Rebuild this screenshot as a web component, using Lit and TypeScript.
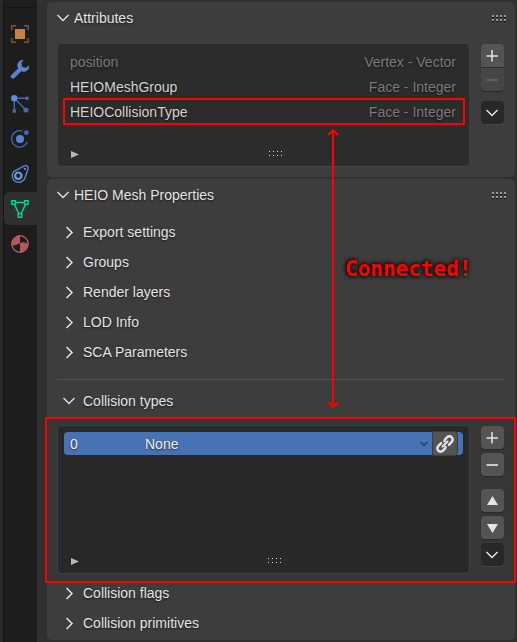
import { LitElement, html, svg, css } from "lit";
import { customElement, property } from "lit/decorators.js";

const chevronDown = html`<svg class="chev" width="14" height="10" viewBox="0 0 14 10" aria-hidden="true">
  <path d="M1.500 2 L7 7.500 L12.500 2" fill="none" stroke="currentColor" stroke-width="1.300" />
</svg>`;
const chevronRight = html`<svg class="chev" width="14" height="14" viewBox="0 0 14 14" aria-hidden="true">
  <path d="M4.500 2 L10 7.500 L4.500 13" fill="none" stroke="currentColor" stroke-width="1.500" />
</svg>`;
const plus = html`<svg width="23" height="23" viewBox="0 0 23 23" aria-hidden="true">
  <path d="M5.500 12 H17 M11 6 V17.500" fill="none" stroke="currentColor" stroke-width="1.500" />
</svg>`;
const minus = html`<svg width="23" height="23" viewBox="0 0 23 23" aria-hidden="true">
  <path d="M5.500 12 H17" fill="none" stroke="currentColor" stroke-width="1.600" />
</svg>`;
const menuDown = html`<svg width="23" height="23" viewBox="0 0 23 23" aria-hidden="true">
  <path d="M5.500 9 L11 14.500 L16.500 9" fill="none" stroke="currentColor" stroke-width="1.500" />
</svg>`;
const arrowUp = html`<svg width="23" height="23" viewBox="0 0 23 23" aria-hidden="true">
  <path d="M6 16 L11.500 7 L17 16 Z" fill="currentColor" />
</svg>`;
const arrowDown = html`<svg width="23" height="23" viewBox="0 0 23 23" aria-hidden="true">
  <path d="M6 8 H17 L11.500 17 Z" fill="currentColor" />
</svg>`;
const link = html`<svg width="18" height="18" viewBox="0 0 18 18" aria-hidden="true">
  <g fill="none" stroke="#e6e6e6" stroke-width="2.400" stroke-linecap="round" transform="rotate(-45 9 9)">
    <path d="M6.800 5.700 H2.800 A3.300 3.300 0 0 0 2.800 12.300 H5 A3.300 3.300 0 0 0 7.400 11.400" />
    <path d="M11.200 12.300 H15.200 A3.300 3.300 0 0 0 15.200 5.700 H13 A3.300 3.300 0 0 0 10.600 6.600" />
    <path d="M5.500 9 H12.500" stroke-width="2" />
  </g>
</svg>`;

const gripDots = [0, 4, 8, 12];
const grip = html`<svg width="14" height="7" viewBox="0 0 14 7" shape-rendering="crispEdges" aria-hidden="true">
  ${gripDots.map(
    (x) => svg`<path d="M${x} 0h2v2h-2z M${x} 4h2v2h-2z" fill="#9a9a9a" /><path d="M${x} 2h2v1h-2z M${x} 6h2v1h-2z" fill="#111" />`,
  )}
</svg>`;
const listGrip = html`<svg class="dots" width="14" height="6" viewBox="0 0 14 6" shape-rendering="crispEdges" aria-hidden="true">
  ${gripDots.map((x) => svg`<path d="M${x} 0h1v1h-1z M${x} 4h1v1h-1z" fill="#e0e0e0" />`)}
</svg>`;
const play = html`<svg width="8" height="7" viewBox="0 0 8 7" aria-hidden="true">
  <path d="M0 0 L8 3.500 L0 7 Z" fill="#b8b8b8" />
</svg>`;

const tabs = [
  {
    name: "Object",
    icon: svg`<rect x="5" y="5" width="10" height="10" fill="#c58148" />
      <path d="M1.800 6V1.800H6 M14 1.800H18.200V6 M18.200 14V18.200H14 M6 18.200H1.800V14" fill="none" stroke="#7d5333" stroke-width="1.500" />`,
  },
  {
    name: "Modifiers",
    icon: svg`<path d="M2.900 17.600 L10.300 10.200" stroke="#5d82d2" stroke-width="4.200" stroke-linecap="round" />
      <path d="M13.600 1.200 A5.200 5.200 0 0 0 7.800 8.400 L11.700 12.300 A5.200 5.200 0 0 0 18.900 6.300 L16.300 8.800 L12.900 8.200 L12 7.300 L11.400 3.800 Z" fill="#5d82d2" />`,
  },
  {
    name: "Particles",
    icon: svg`<path d="M4.300 4.300V17 M8 4.300H17 M6.500 6.500L16 16" stroke="#4667aa" stroke-width="1.400" fill="none" />
      <circle cx="4.300" cy="4.300" r="3.200" fill="#648cdf" /><circle cx="17" cy="4.300" r="1.900" fill="#4667aa" />
      <circle cx="4.300" cy="17" r="1.900" fill="#4667aa" /><circle cx="16" cy="16" r="2.600" fill="#4667aa" />`,
  },
  {
    name: "Physics",
    icon: svg`<path d="M12.600 2.200 A8.200 8.200 0 1 0 17.400 12.800" fill="none" stroke="#4667aa" stroke-width="1.400" />
      <circle cx="10" cy="10" r="4" fill="#5d82d2" /><circle cx="16.300" cy="3.700" r="2.400" fill="#4667aa" />`,
  },
  {
    name: "Constraints",
    icon: svg`<path d="M3.600 7.600 L14.200 1.800 C16.600 .8 18.600 2.600 18 5 L14.800 14.400 A6.600 6.600 0 1 1 3.600 7.600 Z" fill="none" stroke="#5d82d2" stroke-width="1.400" />
      <circle cx="8.300" cy="11.700" r="3.200" fill="none" stroke="#7198e8" stroke-width="2.200" /><circle cx="15" cy="4.900" r="1.200" fill="#5d82d2" />`,
  },
  {
    name: "Data",
    icon: svg`<path d="M5 3.500H15 M4.500 5.500L9 15 M15.500 5.500L11 15" fill="none" stroke="#00d698" stroke-width="1.500" />
      <path d="M1.800 1.800h3.600v3.600h-3.600z M14.600 1.800h3.600v3.600h-3.600z M8.200 14.600h3.600v3.600h-3.600z" fill="#303030" stroke="#00d698" stroke-width="1.400" />`,
  },
  {
    name: "Material",
    icon: svg`<circle cx="10" cy="10" r="8.200" fill="#1d1d1d" stroke="#b3595e" stroke-width="1.400" />
      <path d="M10 9V1.800A8.200 8.200 0 0 0 1.800 10V11.500Q5 12 10 9Z M10 9Q14 7 18.200 10A8.200 8.200 0 0 1 10 18.200Z" fill="#b3595e" />`,
  },
];

const base = css`
  * {
    box-sizing: border-box;
  }
  button,
  select {
    margin: 0;
    padding: 0;
    border: 0;
    background: none;
    color: inherit;
    font: inherit;
    text-shadow: inherit;
    text-align: left;
  }
  svg {
    display: block;
    flex: none;
  }
`;

@customElement("panel-row")
class PanelRow extends LitElement {
  @property() label = "";
  @property({ type: Boolean }) open = false;

  static styles = [
    base,
    css`
      :host {
        display: block;
      }
      .row {
        display: flex;
        align-items: center;
        gap: 7px;
        width: 100%;
        height: 30px;
        padding-left: 15px;
      }
    `,
  ];

  render() {
    return html`<button class="row" aria-expanded=${this.open ? "true" : "false"}>
      ${this.open ? chevronDown : chevronRight}<span>${this.label}</span>
    </button>`;
  }
}

@customElement("app-root")
class AppRoot extends LitElement {
  static styles = [
    base,
    css`
      :host {
        display: flex;
        min-height: 100vh;
        background: #303030;
        color: #e4e4e4;
        font: 14px/20px "Liberation Sans", Arial, sans-serif;
        text-shadow: 0 1px 2px rgba(0, 0, 0, 0.6);
      }
      .tabs {
        flex: none;
        width: 37px;
        padding-top: 7px;
        border-left: 3px solid #2a2a2a;
        background: #1d1d1d;
        box-shadow: inset 1px 0 #151515;
      }
      .group {
        display: flex;
        flex-direction: column;
        gap: 2px;
        padding: 9px 0 1px 1px;
        border-top: 1px solid #141414;
        border-bottom: 1px solid #181818;
      }
      .tab {
        display: flex;
        align-items: center;
        height: 33px;
        padding-left: 6px;
        border-radius: 5px 0 0 5px;
      }
      .tab.active {
        background: #303030;
      }
      .main {
        position: relative;
        flex: 1;
        min-width: 0;
        display: flex;
        flex-direction: column;
        gap: 2px;
        padding: 2px 2px 2px 10px;
      }
      .card {
        border-radius: 5px;
        background: #3d3d3d;
      }
      .head {
        display: flex;
        align-items: center;
        justify-content: space-between;
        height: 32px;
        padding: 0 9px;
      }
      .title {
        display: flex;
        align-items: center;
        gap: 4px;
      }
      .block {
        display: flex;
        gap: 12px;
        padding: 10px 11px 11px;
      }
      .list {
        flex: 1;
        min-width: 0;
        display: flex;
        flex-direction: column;
        justify-content: space-between;
        padding: 5px;
        border-radius: 4px;
        background: #2c2c2c;
        box-shadow: 0 1px #464646;
      }
      .items {
        margin: 0 0 23px;
        padding: 0;
        list-style: none;
      }
      .item {
        position: relative;
        display: flex;
        justify-content: space-between;
        align-items: center;
        height: 25px;
        padding: 0 8px 0 7px;
        color: #d4d4d4;
      }
      .kind,
      .muted {
        color: #7b7b7b;
      }
      .marked::after {
        content: "";
        position: absolute;
        inset: -1px -1px -1px 0;
        border: 2px solid #f00;
      }
      .foot {
        display: grid;
        grid-template-columns: 1fr auto 1fr;
        align-items: center;
        height: 14px;
        padding-left: 8px;
      }
      .dots {
        margin-left: 16px;
      }
      .tools {
        flex: none;
        width: 23px;
        display: flex;
        flex-direction: column;
      }
      .tool {
        width: 23px;
        height: 23px;
        border-radius: 4px;
        background: #545454;
        box-shadow: 0 1px 1px #2a2a2a;
      }
      .pair {
        display: grid;
        gap: 1px;
        margin-bottom: 10px;
      }
      .pair .tool:first-child {
        border-radius: 4px 4px 0 0;
      }
      .pair .tool:last-child {
        border-radius: 0 0 4px 4px;
      }
      .tool:disabled {
        background: #464646;
        color: #646464;
      }
      .tool.menu {
        background: #282828;
        box-shadow: 0 1px #464646;
      }
      .rows {
        padding-top: 6px;
      }
      .rule {
        height: 1px;
        margin: 12px 10px 6px;
        border: 0;
        background: #525252;
      }
      .region {
        display: flex;
        gap: 12px;
        margin: 1px -1px -5px -2px;
        padding: 7px 10px 8px 11px;
        border: 2px solid #f00;
        background: #363636;
      }
      .region .list {
        background: #282828;
        box-shadow: 0 0 0 1px #404040;
        padding: 6px 6px 5px;
      }
      .region .foot {
        padding-left: 7px;
      }
      .region .tools {
        gap: 4px;
        padding-bottom: 7px;
      }
      .move {
        display: grid;
        gap: 4px;
        margin-top: 9px;
      }
      .slot {
        display: flex;
        align-items: center;
        height: 23px;
        padding: 0 5px 0 6px;
        border-radius: 4px;
        background: #4772b3;
        color: #f0f0f0;
      }
      .index {
        width: 75px;
      }
      .pick {
        position: relative;
        flex: 1;
        min-width: 0;
        display: flex;
        align-items: center;
      }
      .pick .select {
        width: 100%;
        height: 23px;
        appearance: none;
      }
      .pick .mark {
        position: absolute;
        right: 3px;
        color: #22406f;
      }
      .linkbtn {
        display: grid;
        place-items: center;
        width: 26px;
        height: 25px;
        border: 1px solid #3c3c3c;
        border-radius: 0 4px 4px 0;
        background: #545454;
      }
      .last {
        padding-bottom: 2px;
      }
      .note {
        position: absolute;
        top: 128px;
        left: 289px;
        display: flex;
        align-items: center;
        gap: 5px;
        color: #f00;
        font: bold 21px/24px "DejaVu Sans Mono", monospace;
        text-shadow: 0 0 4px #000, 0 0 5px #000;
        pointer-events: none;
      }
    `,
  ];

  head(title: string) {
    return html`<div class="head">
      <button class="title" aria-expanded="true">${chevronDown}<span>${title}</span></button>
      ${grip}
    </div>`;
  }

  foot() {
    return html`<div class="foot">
      <button aria-label="Filter">${play}</button>${listGrip}
    </div>`;
  }

  render() {
    return html`
      <nav class="tabs">
        <div class="group">
          ${tabs.map(
            (t) => html`<button class="tab ${t.name === "Data" ? "active" : ""}" aria-label=${t.name}>
              <svg width="20" height="20" viewBox="0 0 20 20" aria-hidden="true">${t.icon}</svg>
            </button>`,
          )}
        </div>
      </nav>
      <main class="main">
        <section class="card">
          ${this.head("Attributes")}
          <div class="block">
            <div class="list">
              <ul class="items">
                <li class="item"><span class="muted">position</span><span class="kind">Vertex - Vector</span></li>
                <li class="item"><span>HEIOMeshGroup</span><span class="kind">Face - Integer</span></li>
                <li class="item marked"><span>HEIOCollisionType</span><span class="kind">Face - Integer</span></li>
              </ul>
              ${this.foot()}
            </div>
            <div class="tools">
              <div class="pair">
                <button class="tool" aria-label="Add attribute">${plus}</button>
                <button class="tool" aria-label="Remove attribute" disabled>${minus}</button>
              </div>
              <button class="tool menu" aria-label="Attribute menu">${menuDown}</button>
            </div>
          </div>
        </section>
        <section class="card">
          ${this.head("HEIO Mesh Properties")}
          <div class="rows">
            ${["Export settings", "Groups", "Render layers", "LOD Info", "SCA Parameters"].map(
              (l) => html`<panel-row label=${l}></panel-row>`,
            )}
          </div>
          <hr class="rule" />
          <panel-row label="Collision types" open></panel-row>
          <div class="region">
            <div class="list">
              <div class="slot">
                <label class="index" for="type">0</label>
                <div class="pick">
                  <select class="select" id="type">
                    <option>None</option>
                  </select>
                  <svg class="mark" width="10" height="8" viewBox="0 0 10 8" aria-hidden="true">
                    <path d="M1.500 2 L5 5.500 L8.500 2" fill="none" stroke="currentColor" stroke-width="1.500" />
                  </svg>
                </div>
                <button class="linkbtn" aria-label="Link">${link}</button>
              </div>
              ${this.foot()}
            </div>
            <div class="tools">
              <button class="tool" aria-label="Add type">${plus}</button>
              <button class="tool" aria-label="Remove type">${minus}</button>
              <div class="move">
                <button class="tool" aria-label="Move up">${arrowUp}</button>
                <button class="tool" aria-label="Move down">${arrowDown}</button>
              </div>
              <button class="tool menu" aria-label="Type menu">${menuDown}</button>
            </div>
          </div>
          <div class="last">
            <panel-row label="Collision flags"></panel-row>
            <panel-row label="Collision primitives"></panel-row>
          </div>
        </section>
        <div class="note">
          <svg width="14" height="281" viewBox="0 0 14 281" aria-hidden="true">
            <path d="M7 2V279 M2 7L7 2L12 7 M2 274L7 279L12 274" fill="none" stroke="#f00" stroke-width="2" />
          </svg>
          <span>Connected!</span>
        </div>
      </main>
    `;
  }
}
